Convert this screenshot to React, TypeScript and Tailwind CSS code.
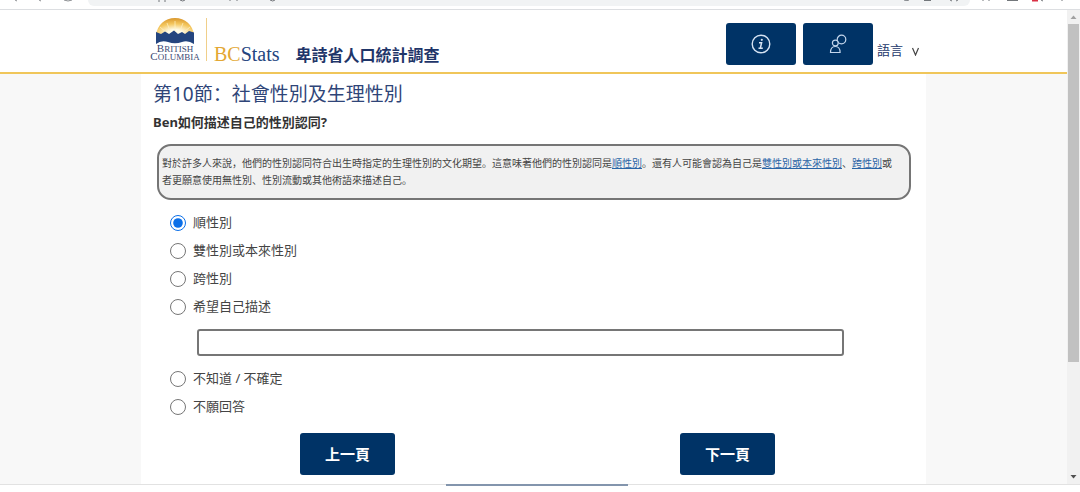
import React, { useState } from 'react';

const optionsBefore = [
  { id: 'cisgender', label: '順性別' },
  { id: 'two-spirit', label: '雙性別或本來性別' },
  { id: 'transgender', label: '跨性別' },
  { id: 'self-describe', label: '希望自己描述' },
];

const optionsAfter = [
  { id: 'unknown', label: '不知道 / 不確定' },
  { id: 'no-answer', label: '不願回答' },
];

const BrowserBar: React.FC = () => (
  <div className="flex h-[10px] shrink-0 items-start border-b border-[#dcdee1] bg-white">
    <svg className="w-[88px] h-[5px]" viewBox="0 0 88 5" fill="none" stroke="#8a8d91">
      <path d="M15 0l2 1M39 0l2 1M64 0q4 2 8 0" />
    </svg>
    <div className="h-[6px] flex-1 flex justify-between rounded-b-full bg-[#f1f3f4]">
      <svg className="w-[200px] h-[5px]" viewBox="0 0 200 5" fill="none" stroke="#73777b">
        <path d="M71 0v2M77 0v2M92 0q3 2 5 0M142 0v1M149 0v1M182 0q3 2 5 0" />
      </svg>
      <svg className="w-[70px] h-[5px]" viewBox="0 0 70 5" fill="none" stroke="#73777b">
        <path d="M4 0q3 1 5 0M24 .5h7M50 0l2 1M58 0l-2 1" />
      </svg>
    </div>
    <svg className="w-[110px] h-[5px]" viewBox="0 0 110 5" fill="none" stroke="#73777b">
      <path d="M13 0v1M19 0v1M37 .5h11M71 0l2 1M92 0v1" />
      <path d="M62 .5h6" stroke="#d93045" strokeWidth="2" />
    </svg>
  </div>
);

const Logo: React.FC = () => (
  <svg className="mb-[10px] w-[52px] h-[50px]" viewBox="0 0 52 50" role="img" aria-label="British Columbia">
    <defs>
      <radialGradient id="sun" cx="0.5" cy="0.85" r="0.85">
        <stop offset="0.2" stopColor="#fffbe8" />
        <stop offset="0.6" stopColor="#f4c75f" />
        <stop offset="1" stopColor="#d9962b" />
      </radialGradient>
    </defs>
    <path d="M7 23C8 13 16 6 26 6S44 13 45 23Z" fill="url(#sun)" />
    <path
      d="M26 19V9M21 19L18 11M31 19L34 11M17 20L11 15M35 20L41 15"
      stroke="#fff3c9"
      strokeWidth="1"
      opacity="0.7"
    />
    <path
      d="M7 20L12 22L16 19.500L20 22L25 18.500L29 22L33 20L36 22L40 19L45 20.500V32Q39 28 33 30Q26 32.500 19 30Q12 28 7 32Z"
      fill="#24457f"
    />
    <g fill="#3b4a73" textAnchor="middle" className="font-['Liberation_Serif',serif]">
      <text x="26" y="40" fontSize="9">
        <tspan fontSize="11">B</tspan>RITISH
      </text>
      <text x="26" y="48" fontSize="9">
        <tspan fontSize="11">C</tspan>OLUMBIA
      </text>
    </g>
  </svg>
);

const Header: React.FC = () => (
  <header className="border-b-2 border-[#f0c65a] bg-white">
    <div className="mx-auto flex h-[62px] max-w-[785px] items-end pl-2">
      <Logo />
      <div className="ml-[5px] mr-[7px] mb-[11px] h-[43px] w-px bg-[#f0cf8a]" />
      <span className="mb-1.5 font-['Liberation_Serif',serif] text-[20px] leading-6 text-[#24457f]">
        <span className="text-[#e3a834]">BC</span>Stats
      </span>
      <h1 className="ml-4 mb-[5px] text-[16px] leading-6 font-bold text-[#1f3569]">卑詩省人口統計調查</h1>

      <div className="ml-auto mr-1.5 mb-[5px] flex">
        <button type="button" aria-label="資訊" className="flex h-[42px] w-[70px] items-center justify-center rounded-[3px] bg-[#003366]">
          <svg className="w-5 h-5" viewBox="0 0 20 20" fill="none" stroke="#d5e3f3" strokeWidth="1.4">
            <circle cx="10" cy="10" r="8.800" />
            <circle cx="10.800" cy="5.800" r="1.100" fill="#d5e3f3" stroke="none" />
            <path d="M8 8.700h2.600L9.300 14.300h2.500M7.500 14.300h2" strokeWidth="1.500" />
          </svg>
        </button>
        <button type="button" aria-label="聯絡我們" className="ml-[7px] flex h-[42px] w-[70px] items-center justify-center rounded-[3px] bg-[#003366]">
          <svg className="w-5 h-5" viewBox="0 0 20 20" fill="none" stroke="#c3d6ec" strokeWidth="1.200">
            <circle cx="13.500" cy="5.500" r="4.300" />
            <circle cx="7.300" cy="9" r="2.900" fill="#003366" />
            <path d="M2.500 18.500q0-6 4.800-6t4.800 6z" />
          </svg>
        </button>
        <button type="button" className="ml-1 mt-3 flex h-8 items-center gap-2 text-[13px] text-[#24386b]">
          語言
          <svg className="w-[9px] h-[9px]" viewBox="0 0 9 9" fill="none" stroke="#444" strokeWidth="1.200">
            <path d="M1.500 1L4.500 8L7.500 1" />
          </svg>
        </button>
      </div>
    </div>
  </header>
);

const TermLink: React.FC<{ children: React.ReactNode }> = ({ children }) => (
  <a href="#" className="text-[#2a64a6] underline">{children}</a>
);

const Scrollbar: React.FC = () => (
  <div className="flex w-[13px] shrink-0 flex-col items-center bg-[#f1f1f1]">
    <svg className="w-[13px] h-[14px] shrink-0" viewBox="0 0 13 14">
      <path d="M3.500 9L6.500 5.500L9.500 9Z" fill="#a0a0a0" />
    </svg>
    <div className="w-[11px] basis-[338px] bg-[#c1c1c1]" />
    <svg className="mt-auto w-[13px] h-[14px] shrink-0" viewBox="0 0 13 14">
      <path d="M3.500 5L6.500 8.500L9.500 5Z" fill="#505050" />
    </svg>
  </div>
);

export default function App() {
  const [selected, setSelected] = useState('cisgender');
  const [description, setDescription] = useState('');

  const renderOption = (option: { id: string; label: string }) => (
    <label key={option.id} htmlFor={option.id} className="flex h-7 items-center gap-[7px] text-[13px] text-[#444]">
      <input
        type="radio"
        name="gender"
        id={option.id}
        checked={selected === option.id}
        onChange={() => setSelected(option.id)}
        className="w-4 h-4 accent-[#0b6fe8]"
      />
      {option.label}
    </label>
  );

  return (
    <div className="flex h-screen flex-col overflow-hidden bg-white font-['Noto_Sans','Noto_Sans_CJK_SC',sans-serif]">
      <BrowserBar />
      <div className="flex min-h-0 flex-1">
        <div className="flex min-w-0 flex-1 flex-col bg-[#f8f8f8]">
          <Header />
          <main className="mx-auto w-full max-w-[785px] flex-1 bg-white px-3 pt-1">
            <h2 className="text-[19px] leading-8 text-[#2f4578]">第10節：社會性別及生理性別</h2>
            <p id="question" className="text-[13px] leading-6 font-bold text-[#333]">Ben如何描述自己的性別認同?</p>

            <div className="ml-1 mr-[3px] mt-2.5 rounded-[14px] border-2 border-[#757575] bg-[#f1f1f1] py-[9px] px-[3px] text-[10px] leading-[17px] text-[#444]">
              對於許多人來說，他們的性別認同符合出生時指定的生理性別的文化期望。這意味著他們的性別認同是<TermLink>順性別</TermLink>。還有人可能會認為自己是<TermLink>雙性別或本來性別</TermLink>、<TermLink>跨性別</TermLink>或
              <br />
              者更願意使用無性別、性別流動或其他術語來描述自己。
            </div>

            <div role="radiogroup" aria-labelledby="question" className="mt-[9px] pl-[17px]">
              {optionsBefore.map(renderOption)}
              <input
                type="text"
                aria-label="希望自己描述"
                value={description}
                onChange={(e) => setDescription(e.target.value)}
                className="ml-[27px] mt-2 mb-[9px] block h-[27px] w-[87%] rounded-[3px] border-2 border-[#767676] bg-white px-2 text-[13px]"
              />
              {optionsAfter.map(renderOption)}
            </div>

            <div className="mt-3 flex justify-between pl-[147px] pr-[139px]">
              <button type="button" className="h-[42px] w-[95px] rounded-[3px] bg-[#003366] text-[15px] font-bold text-white">上一頁</button>
              <button type="button" className="h-[42px] w-[95px] rounded-[3px] bg-[#003366] text-[15px] font-bold text-white">下一頁</button>
            </div>
          </main>
        </div>
        <Scrollbar />
      </div>
      <div className="flex h-2 shrink-0 justify-center border-t border-[#e2e2e2] bg-white pr-1.5">
        <div className="-mt-px h-0.5 w-[182px] bg-[#8395ad]" />
      </div>
    </div>
  );
}
